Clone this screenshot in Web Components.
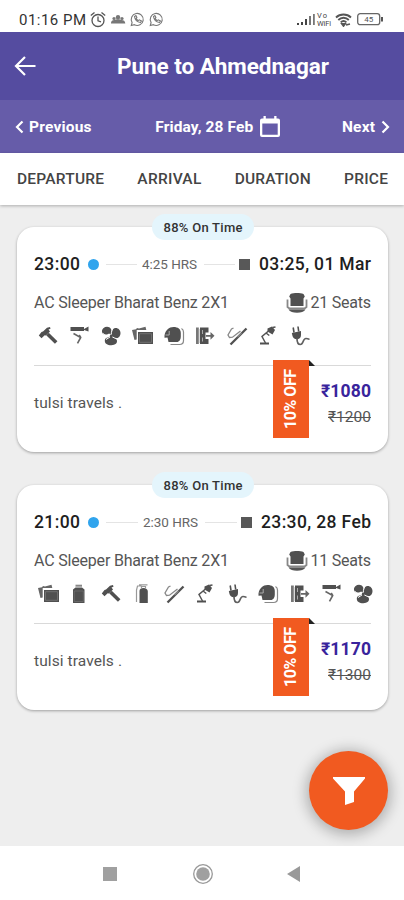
<!DOCTYPE html>
<html lang="en">
<head>
<meta charset="utf-8">
<title>Pune to Ahmednagar</title>
<style>
html,body{margin:0;height:100%;background:#eee}
body{font-family:Roboto,"Liberation Sans",sans-serif;overflow:hidden}
</style>
</head>
<body>
<bus-app></bus-app>
<script>
const define = (name, html, setup) => customElements.define(name, class extends HTMLElement {
  connectedCallback() {
    if (this.shadowRoot) return;
    const root = this.attachShadow({mode: 'open'});
    root.innerHTML = typeof html === 'function' ? html(this) : html;
    if (setup) setup(this, root);
  }
});

/* Text whose tracking is set so that it spans the width given in "w". */
define('fit-text', '<style>:host{display:inline-block;white-space:nowrap;flex:none}span{display:inline-block}</style><span><slot></slot></span>', (el, root) => {
  const w = +el.getAttribute('w'), s = root.querySelector('span');
  const n = el.textContent.length;
  const natural = parseFloat(getComputedStyle(s).width);
  const gap = (w - natural) / (n - 1);
  s.style.letterSpacing = gap + 'px';
  s.style.marginRight = -gap + 'px';
});

const glyphs = {
  hammer: '<path d="M1.800 10.500 4.500 7l1.500-.5 4-3.800L13 2l.5 1.800-2 .7 1.500 2-4 4-1.300-.3-3.200 3z"/><path d="m10.500 9 8.700 8.500" stroke="#505050" stroke-width="3.600"/>',
  cctv: '<path d="M2.500 2h13.500v4h-13.500zM16 4l4.500-2.500v5L16 5z"/><path d="M5.500 8.500 12.700 12.500l-3.200 5.800M12.700 12.500l-1.500-2.500" fill="none" stroke="#666" stroke-width="1.600"/>',
  fan: '<path d="M11.200 10.500C9.500 7.500 8.500 9.500 5.500 9.700 2 9.700.8 5.500 3.300 3.200 6 1 9.500 1.500 11 4c1 2 .8 4.500.2 6.500z"/><path d="M11.500 10.500C12 7 11.500 5 14 3.500c3-1.500 6.500 1 6.500 4.500 0 4-3.500 6.500-6 5-1.500-.8-1.800-1.800-3-2.500z"/><path d="M10.800 11c2 1.500 5 1.500 6 4 1 3-1.500 5-5.500 5.200-4 0-6.500-1.700-6.500-4.500 0-3.200 3.500-3 6-4.700z"/><path d="M3 8.500c2.500 2.500 5 2 8 2.500 2.500 1.500 5 3.500 8.500 2.500" fill="none" stroke="#fff" stroke-width="1"/><path d="M12.500 4c-1 2.500-1.500 4.500-1.200 7-1.300 1.500-3.500 2-5.300 3.500" fill="none" stroke="#fff" stroke-width="1"/><circle cx="11.300" cy="11" r="1.500"/>',
  media: '<path d="m1 5 4-.8 1-1.200 2 .5 6.500-1.800.8 3.300H5.700v9.500L3.500 15z" fill="#666"/><path d="M7 7h15v12H7z"/><path d="M8.500 8.700h12v8.600h-12z" fill="none" stroke="#777" stroke-width=".8"/>',
  linen: '<path d="M1.500 10.500C2.500 5 6 2 10.500 2c4.500 0 7.300 2 7.300 6v3.500c0 3-1.500 5.500-4 5.500H5.500l-1-4.500-3 .2z"/><path d="M18.500 3.500c1.500.8 2 2 2 3.500v8.500c0 2.500-1.500 4-4 4H7.500" fill="none" stroke="#888" stroke-width="1.200"/><path d="M2.500 10h3.700V6" fill="none" stroke="#aaa" stroke-width="1"/>',
  exit: '<path d="M2 2.500h2.800V19H2z" fill="#777"/><path d="M6 2.500h8.500v5h-3v6.500h3V19H6z"/><path d="M8.500 5v4M8.500 12.500v4" stroke="#aaa"/><path d="M5.400 4v14" stroke="#ccc" stroke-width=".8"/><path d="M12 10h4.500V7l4 3.800-4 3.900v-3H12z" fill="#666"/>',
  mallet: '<path d="m4.500 19.500 16-16" stroke="#505050" stroke-width="2.300"/><path d="M7.500 3 5.500 4 2 10l1.500 2.500 3-.3L14.500 6m-3 6 4-4" fill="none" stroke="#888" stroke-width="1.300"/>',
  lamp: '<path d="M3 17.500h9v2H3zM10.500 3.500 15 1.500l3 3.500-2.500 4.500-5-3z"/><path d="M11.500 6 5 11.500 8.500 18" fill="none" stroke="#555" stroke-width="1.500"/><path d="m9 8 3.300 2.500M15.500 2.500 18.500 2" stroke="#555" stroke-width="1.500"/>',
  plug: '<path d="M2.800 8 12 6v4c0 2.500-1.400 4-3.500 4.200C5.800 14.500 4 13 3.500 11z"/><path d="M5 7.500 4.200 2.500M9.700 6.500 9 1.500" stroke="#505050" stroke-width="1.600"/><path d="M8 13.500c0 4 1 6 3.300 6 3.500 0 2.200-6 5.700-6 1.500 0 2 .7 3.500.5" fill="none" stroke="#606060" stroke-width="1.700"/>',
  bottle: '<path d="M7.500 1.700h6.500v2H7.500z" fill="#888"/><path d="M5 6.500 7.500 4.500H14l2.500 2V20H5z"/><path d="M6.300 8h9v10.500h-9z" fill="none" stroke="#777" stroke-width=".6"/>',
  extinguisher: '<path d="M8.500 8c0-2 1.500-3 4-3s4.300 1.200 4.300 3.500V20H8.500z"/><path d="M10.500 5V3.500h4V5M10.500 3H6.500l-1 4v12M8 1.800h8.500" fill="none" stroke="#999" stroke-width="1.200"/>'
};
define('amenity-icon', el => `<style>:host{display:block;width:22px;height:22px;flex:none}svg{display:block}</style>
<svg width="22" height="22" viewBox="0 0 22 22" fill="#505050">${glyphs[el.getAttribute('name')]}</svg>`);

define('status-bar', `<style>
:host{display:flex;height:32px;background:#fff;align-items:center;padding:7px 20px 0 19px;box-sizing:border-box;color:#333;font-size:15px}
svg{display:block;flex:none}
.vo{font-size:7.500px;line-height:8px;margin-left:2px;display:flex;flex-direction:column;color:#444}
.sp{flex:1}
</style>
<fit-text w="67">01:16 PM</fit-text>
<svg width="80" height="20" viewBox="88 10 80 20" fill="none" stroke="#555" stroke-width="1.300" style="margin-left:2px">
<circle cx="98" cy="20.500" r="6"/><path d="M98 16.500v4.300l3 1M90.800 15.500l3.700-3M101.500 12.500l3.700 3"/>
<g fill="#777" stroke="none"><circle cx="118" cy="17.200" r="2.200"/><circle cx="114" cy="18.500" r="1.600"/><circle cx="122" cy="18.500" r="1.600"/><path d="M111 23.500c0-3 2-3.500 3.500-3.500 1.500-1 5.500-1 7 0 2 0 3.800 1 3.800 3.500z"/></g>
<g stroke="#777" stroke-width="1.100"><path d="m131.300 25.500.8-3a6 6 0 1 1 2.300 2.200z"/><path d="M134.500 16.500c.5 3.500 2.500 5.500 6 6l1-1.500-2.200-1.200-1.200.8-2-2 .8-1.200-1-1.800zM150.300 25.500l.8-3a6 6 0 1 1 2.300 2.200z"/><path d="M153.500 16.500c.5 3.500 2.500 5.500 6 6l1-1.500-2.200-1.200-1.200.8-2-2 .8-1.200-1-1.800z"/></g>
</svg><span class="sp"></span>
<svg width="18" height="13" viewBox="0 0 18 13" fill="#444"><path d="M0 10h2v2H0zM4 9h2v3H4zM8 6h2v6H8z"/><path d="M12 3h2v9h-2zM16 1h1.800v11H16z" fill="#777"/></svg>
<div class="vo"><fit-text w="10">Vo</fit-text><fit-text w="14">WiFi</fit-text></div>
<svg width="17" height="14" viewBox="0 0 17 14" fill="none" stroke="#555" stroke-width="1.800" style="margin-left:4px"><path d="M1 4.500c4-4 11-4 15 0M3.300 7c3-3 7.500-3 10.500 0M5.700 9.300c1.700-1.700 4-1.700 5.700 0M11 12l4-1"/><path d="m7 11 1.500 2 1.500-2z" fill="#555"/></svg>
<svg width="27" height="13" viewBox="0 0 27 13" style="margin-left:5px"><rect x=".7" y=".7" width="22" height="11" rx="2.500" fill="#fff" stroke="#666" stroke-width="1.300"/><path d="M24 4h2v4.500h-2z" fill="#555"/><text x="11.700" y="9" text-anchor="middle" font-size="8" fill="#555" font-family="Roboto,sans-serif">45</text></svg>`);

define('title-bar', `<style>
:host{display:flex;height:68px;background:#554ca0;color:#fff;align-items:center;padding-left:14px;box-sizing:border-box;font-size:22.500px;font-weight:700}
svg{margin-right:81px;flex:none}
</style><svg width="22" height="20" viewBox="0 0 22 20" fill="none" stroke="#fff" stroke-width="2.200"><path d="M21.500 10H2M11 1 2 10l9 9"/></svg><fit-text w="212">Pune to Ahmednagar</fit-text>`);

define('date-bar', `<style>
:host{display:flex;height:53px;background:#665ca9;color:#fff;align-items:center;padding:0 14px 0 15px;box-sizing:border-box;font-size:15.500px;font-weight:700;justify-content:space-between}
div{display:flex;align-items:center}svg{display:block}
</style>
<div style="gap:5px"><svg width="9" height="14" viewBox="0 0 9 14" fill="none" stroke="#fff" stroke-width="2.200"><path d="M7.500 1.500 2 7l5.500 5.500"/></svg><fit-text w="62.500">Previous</fit-text></div>
<div style="gap:7px;margin-left:2px"><fit-text w="98">Friday, 28 Feb</fit-text><svg width="20" height="22" viewBox="0 0 20 22"><path fill-rule="evenodd" fill="#fff" d="M3.500 0h2.300v2.500h8.400V0h2.300v2.500H18a2 2 0 0 1 2 2V19a2 2 0 0 1-2 2H2a2 2 0 0 1-2-2V4.500a2 2 0 0 1 2-2h1.500zM2.300 7.500v11.200h15.400V7.500z"/></svg></div>
<div style="gap:6px"><fit-text w="33">Next</fit-text><svg width="9" height="14" viewBox="0 0 9 14" fill="none" stroke="#fff" stroke-width="2.200"><path d="M1.500 1.500 7 7l-5.500 5.500"/></svg></div>`);

define('sort-tabs', `<style>
:host{display:flex;height:52px;background:#fff;color:#444;align-items:center;padding:0 16px 1px 17px;box-sizing:border-box;font-size:15.500px;font-weight:500;justify-content:space-between;box-shadow:0 1px 3px #0004;position:relative}
</style><fit-text w="87">DEPARTURE</fit-text><fit-text w="64">ARRIVAL</fit-text><fit-text w="76">DURATION</fit-text><fit-text w="44">PRICE</fit-text>`);

define('offer-ribbon', `<style>
:host{display:block;position:absolute;left:256px;top:133px;width:36px;height:78px;background:#f15a20;color:#fff;font-size:16px;font-weight:700}
:host::after{content:"";position:absolute;left:36px;top:0;border-bottom:6px solid #222;border-right:6px solid transparent;}
div{position:absolute;left:-22px;top:21px;width:78px;height:36px;transform:rotate(-90deg);display:flex;align-items:center;justify-content:center}
</style><div><fit-text w="60">10% OFF</fit-text></div>`);

define('bus-card', el => {
  const a = k => el.getAttribute(k);
  return `<style>
:host{display:grid;grid-template-columns:minmax(0,1fr);grid-template-rows:32px 45px 22px 19px 86px;height:225px;background:#fff;border-radius:17px;position:relative;box-shadow:0 1px 3px #0005;padding:21px 17px 0;box-sizing:border-box;color:#555}
.badge{position:absolute;left:135px;top:-13px;width:102px;height:26px;border-radius:13px;background:#e4f5fc;display:flex;align-items:center;justify-content:center;color:#333;font-size:13px;font-weight:500}
.time{display:flex;align-items:center;color:#1e1e1e;font-size:17.500px;font-weight:500}
.dot{width:11px;height:11px;border-radius:50%;background:#30a4ed;margin-left:8px}
.line{flex:1;height:1px;background:#e4e4e4}
.dur{font-size:13.500px;font-weight:400;color:#666}
.sq{width:11px;height:11px;background:#585858;margin-right:9px}
.bus{display:flex;align-items:center;font-size:16px}
.bus svg{margin:0 3px 0 auto}
.icons{display:flex;gap:9.500px;padding-left:2.500px}
.rule{border-bottom:1px solid #d9d9d9}
.foot{display:flex;justify-content:space-between;font-size:15.500px}
.op{padding-top:28px}
.price{display:flex;flex-direction:column;align-items:flex-end;padding-top:14px}
.now{color:#39249c;font-weight:700;font-size:17.500px;line-height:22px}
.old{font-size:15.500px;line-height:20px;margin-top:5px;color:#555;position:relative}
.old::after{content:"";position:absolute;left:0;right:0;top:9.500px;height:1.300px;background:#555}
</style>
<div class="badge"><fit-text w="79">88% On Time</fit-text></div>
<div class="time"><fit-text w="46">${a('from')}</fit-text><i class="dot"></i><i class="line" style="margin:0 5px 0 7px"></i><fit-text class="dur" w="55">${a('dur')}</fit-text><i class="line" style="margin:0 4px 0 7px"></i><i class="sq"></i><fit-text w="${a('tw')}">${a('to')}</fit-text></div>
<div class="bus"><fit-text w="195">AC Sleeper Bharat Benz 2X1</fit-text><svg width="22" height="20" viewBox="0 0 22 20"><path d="M4.500 1C8-.2 14-.2 17.500 1l1.300 2.500L17.500 5.500V13h-13V5.500L3.200 3.500z" fill="#505050"/><path d="M1.500 6.500V14l2 1.500h15l2-1.500V6.500" fill="none" stroke="#888" stroke-width="1.800"/><path d="M2.500 16.500h17c-1.500 2.500-4.500 3.200-8.500 3.200s-7-.7-8.500-3.200z" fill="#555"/></svg><fit-text w="60.500">${a('seats')}</fit-text></div>
<div class="icons">${a('icons').split(' ').map(n => `<amenity-icon name="${n}"></amenity-icon>`).join('')}</div>
<div class="rule"></div>
<div class="foot"><div class="op"><fit-text w="88">tulsi travels .</fit-text></div><div class="price"><fit-text class="now" w="50">${a('price')}</fit-text><fit-text class="old" w="43">${a('old')}</fit-text></div></div>
<offer-ribbon></offer-ribbon>`;
});

define('filter-button', `<style>
:host{display:flex;align-items:center;justify-content:center;position:absolute;left:309px;top:751px;width:79px;height:79px;border-radius:50%;background:#f15a20;box-shadow:0 2px 14px 3px #0004}
</style><svg width="34" height="28" viewBox="0 0 34 28"><path d="M1 0h32v1.500L22 14.500V25l-9 3V14.500L1 1.500z" fill="#fff"/></svg>`);

define('system-nav', `<style>
:host{display:flex;height:54px;background:#fff;align-items:center;box-sizing:border-box;padding:1px 104px 0 103px;justify-content:space-between;position:relative}
svg{display:block}
</style><svg width="14" height="14"><path d="M0 0h14v14H0z" fill="#a0a0a0"/></svg>
<svg width="22" height="22" viewBox="0 0 22 22" style="margin-left:2px"><circle cx="11" cy="11" r="9.300" fill="none" stroke="#999" stroke-width="1.300"/><circle cx="11" cy="11" r="6.800" fill="#a0a0a0"/></svg>
<svg width="14" height="16"><path d="M14 0v16L1 8z" fill="#999"/></svg>`);

define('bus-app', `<style>
:host{display:flex;flex-direction:column;width:404px;height:900px;background:#eee;position:relative;overflow:hidden}
main{flex:1;display:flex;flex-direction:column;gap:33.400px;padding:22px 16px 0 17px}
</style>
<status-bar></status-bar><title-bar></title-bar><date-bar></date-bar><sort-tabs></sort-tabs>
<main>
<bus-card from="23:00" to="03:25, 01 Mar" tw="112" dur="4:25 HRS" seats="21 Seats" price="₹1080" old="₹1200" icons="hammer cctv fan media linen exit mallet lamp plug"></bus-card>
<bus-card from="21:00" to="23:30, 28 Feb" tw="110" dur="2:30 HRS" seats="11 Seats" price="₹1170" old="₹1300" icons="media bottle hammer extinguisher mallet lamp plug linen exit cctv fan"></bus-card>
</main>
<filter-button></filter-button><system-nav></system-nav>`);
</script>
</body>
</html>
